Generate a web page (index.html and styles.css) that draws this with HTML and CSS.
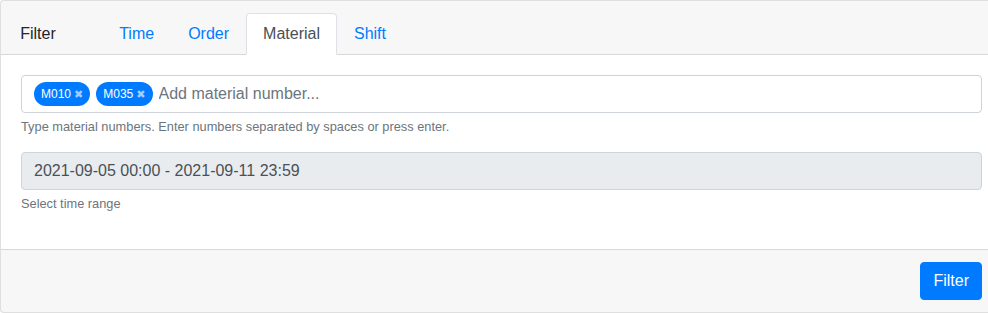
FILE: index.html
```html
<!DOCTYPE html>
<html lang="en">
  <head>
    <meta charset="UTF-8" />
    <meta name="viewport" content="width=device-width, initial-scale=1.0" />
    <title>Filter</title>
    <link rel="stylesheet" href="styles.css">
  </head>
  <body>
    <div class="filter_card">
      <div class="filter_header">
        <div class="filter_title">Filter</div>
        <ul class="filter_tabs">
          <li><a class="filter_tab" href="#">Time</a></li>
          <li><a class="filter_tab" href="#">Order</a></li>
          <li><a class="filter_tab active" href="#">Material</a></li>
          <li><a class="filter_tab" href="#">Shift</a></li>
        </ul>
      </div>
      <div class="filter_body">
        <div class="filter_group">
          <div class="filter_tags-input">
            <span class="filter_tag">M010 <span class="filter_tag-remove">&#x2716;</span></span>
            <span class="filter_tag">M035 <span class="filter_tag-remove">&#x2716;</span></span>
            <input class="filter_tags-field" type="text" placeholder="Add material number..." />
          </div>
          <small class="filter_help">Type material numbers. Enter numbers separated by spaces or press enter.</small>
        </div>
        <div class="filter_group">
          <input class="filter_input" type="text" value="2021-09-05 00:00 - 2021-09-11 23:59" readonly />
          <small class="filter_help">Select time range</small>
        </div>
      </div>
      <div class="filter_footer">
        <button class="filter_btn" type="button">Filter</button>
      </div>
    </div>
  </body>
</html>
```
FILE: styles.css
```css
html,
body {
  overflow: hidden;
}

body {
  margin: 0;
  color: #212529;
  font-family: "Liberation Sans", Arial, sans-serif;
  font-size: 1rem;
  line-height: 1.5;
  background-color: #fff;
}

a {
  text-decoration: none;
}

.filter_card {
  width: 1003px;
  box-sizing: border-box;
  border: 1px solid rgba(0, 0, 0, 0.125);
  border-radius: 0.25rem;
  background-color: #fff;
}

.filter_header {
  display: flex;
  align-items: flex-end;
  padding: 0.75rem 1.25rem 0.75rem 1.2rem;
  background-color: rgba(0, 0, 0, 0.03);
  border-bottom: 1px solid rgba(0, 0, 0, 0.125);
}

.filter_title {
  width: 82px;
  padding: 0.5rem 0;
  margin-bottom: -0.75rem;
  line-height: 1.5;
}

.filter_tabs {
  display: flex;
  list-style: none;
  margin: 0 0 -0.75rem;
  padding: 0;
}

.filter_tabs li {
  margin-bottom: -1px;
}

.filter_tab {
  display: block;
  padding: 0.5rem 1rem;
  color: #007bff;
  border: 1px solid transparent;
  border-top-left-radius: 0.25rem;
  border-top-right-radius: 0.25rem;
}

.filter_tab.active {
  color: #495057;
  background-color: #fff;
  border-color: #dee2e6 #dee2e6 #fff;
}

.filter_body {
  padding: 1.25rem;
}

.filter_group {
  margin-bottom: 1rem;
}

.filter_tags-input {
  display: flex;
  align-items: center;
  gap: 6px;
  height: 38px;
  box-sizing: border-box;
  padding: 0 0.75rem;
  border: 1px solid #ced4da;
  border-radius: 0.25rem;
}

.filter_tag {
  display: inline-flex;
  align-items: center;
  gap: 3px;
  height: 24px;
  padding: 0 7px;
  color: #fff;
  background-color: #007bff;
  border-radius: 10rem;
  font-size: 12px;
  line-height: 1;
}

.filter_tag-remove {
  color: rgba(255, 255, 255, 0.65);
  font-size: 11px;
  font-family: "DejaVu Sans", sans-serif;
}

.filter_tags-field {
  flex: 1;
  border: none;
  outline: none;
  padding: 0;
  font-family: inherit;
  font-size: 1rem;
  color: #495057;
}

.filter_tags-field::placeholder {
  color: #6c757d;
}

.filter_input {
  display: block;
  width: 100%;
  height: 38px;
  box-sizing: border-box;
  padding: 0.375rem 0.75rem;
  font-family: inherit;
  font-size: 1rem;
  color: #495057;
  background-color: #e9ecef;
  border: 1px solid #ced4da;
  border-radius: 0.25rem;
  outline: none;
}

.filter_help {
  display: block;
  margin-top: 0.25rem;
  font-size: 80%;
  color: #6c757d;
}

.filter_footer {
  padding: 0.75rem 1.25rem;
  text-align: right;
  background-color: rgba(0, 0, 0, 0.03);
  border-top: 1px solid rgba(0, 0, 0, 0.125);
}

.filter_btn {
  height: 38px;
  padding: 0.375rem 0.75rem;
  font-family: inherit;
  font-size: 1rem;
  line-height: 1.5;
  color: #fff;
  background-color: #007bff;
  border: 1px solid #007bff;
  border-radius: 0.25rem;
  cursor: pointer;
}
```
